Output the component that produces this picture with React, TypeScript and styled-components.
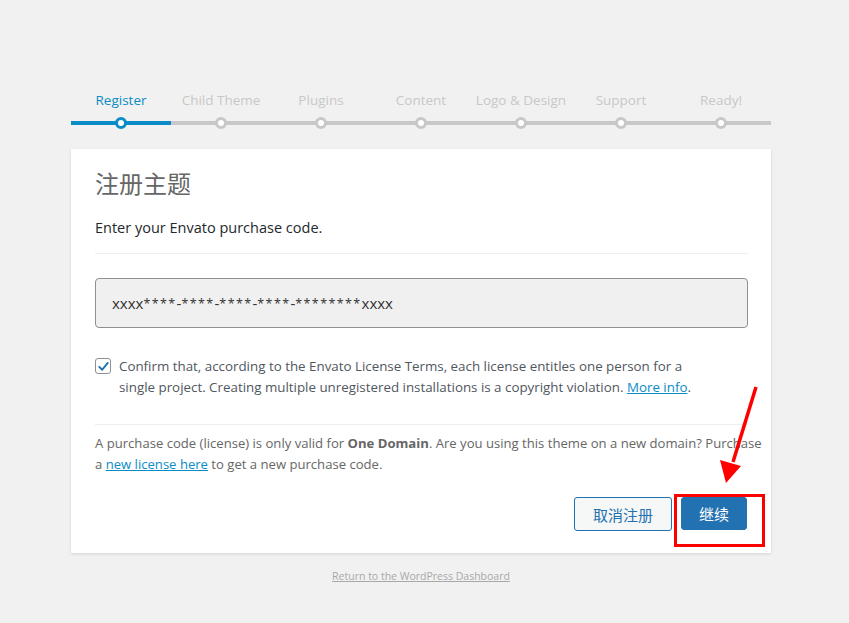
import styled, { createGlobalStyle } from "styled-components";

const GlobalStyle = createGlobalStyle`
  html, body {
    margin: 0;
    padding: 0;
    background: #f1f1f1;
    font-family: "Open Sans", "Noto Sans CJK SC", sans-serif;
  }
`;

const Page = styled.div`
  width: 700px;
  margin-left: 71px;
  padding-top: 88px;
  min-height: 623px;
  box-sizing: border-box;
`;

const Steps = styled.ol`
  display: flex;
  list-style: none;
  margin: 0;
  padding: 0;
`;

const Step = styled.li<{ $active?: boolean }>`
  flex: 1;
  display: flex;
  flex-direction: column;
  align-items: center;
  font-size: 13.5px;
  line-height: 24px;
  color: ${(p) => (p.$active ? "#0a8cc6" : "#c8c8c8")};
`;

const Track = styled.div<{ $active?: boolean }>`
  width: 100%;
  height: 4px;
  margin-top: 9px;
  display: flex;
  align-items: center;
  justify-content: center;
  background: ${(p) => (p.$active ? "#0a8cc6" : "#c8c8c8")};
`;

const Dot = styled.span<{ $active?: boolean }>`
  flex: none;
  width: 6px;
  height: 6px;
  border-radius: 50%;
  background: #fff;
  border: 3px solid ${(p) => (p.$active ? "#0a8cc6" : "#c8c8c8")};
`;

const Card = styled.div`
  margin-top: 24px;
  background: #fff;
  box-shadow: 0 1px 3px rgba(0, 0, 0, 0.13);
  padding: 19px 23px 22px 24px;
`;

const Title = styled.h1`
  margin: 0;
  font-size: 24px;
  line-height: 32px;
  font-weight: 400;
  color: #666;
`;

const Lead = styled.p`
  margin: 17px 0 0;
  font-size: 14.5px;
  line-height: 22px;
  color: #23282d;
`;

const Divider = styled.hr<{ $gap?: number }>`
  margin: ${(p) => p.$gap ?? 14}px 0 0;
  border: 0;
  border-top: 1px solid #eee;
`;

const CodeInput = styled.div`
  margin-top: 24px;
  height: 50px;
  box-sizing: border-box;
  padding: 0 16px;
  display: flex;
  align-items: center;
  background: #f0f0f0;
  border: 1px solid #8c8f94;
  border-radius: 4px;
  font-size: 15px;
  color: #333;
  white-space: pre;
`;

const Stars = styled.span`
  font-size: 12.5px;
  letter-spacing: 1.4px;
  vertical-align: 2px;
`;

const ConfirmRow = styled.label`
  margin-top: 28px;
  display: flex;
  gap: 8px;
  align-items: flex-start;
`;

const Box = styled.span`
  flex: none;
  width: 14px;
  height: 14px;
  margin-top: 2px;
  border: 1px solid #8c8f94;
  border-radius: 3px;
  background: #fff;
  display: flex;
  align-items: center;
  justify-content: center;
`;

const ConfirmText = styled.span`
  max-width: 580px;
  font-size: 13.35px;
  line-height: 21px;
  color: #50575e;
`;

const Link = styled.a`
  color: #0a8cc6;
  text-decoration: underline;
`;

const Note = styled.p`
  margin: 8px -20px 0 0;
  font-size: 13.1px;
  line-height: 21px;
  color: #666;
`;

const Actions = styled.div`
  margin-top: 22px;
  display: flex;
  justify-content: flex-end;
  gap: 9px;
  padding-right: 1px;
`;

const Button = styled.button<{ $primary?: boolean }>`
  position: relative;
  height: ${(p) => (p.$primary ? "33px" : "34px")};
  padding: 0 ${(p) => (p.$primary ? "17px" : "18px")};
  border-radius: 3px;
  border: 1px solid #2271b1;
  background: ${(p) => (p.$primary ? "#2271b1" : "#f6f7f7")};
  color: ${(p) => (p.$primary ? "#fff" : "#2271b1")};
  font-family: "Open Sans", "Noto Sans CJK SC", sans-serif;
  font-size: 15px;
  cursor: pointer;
`;

/* red annotation drawn over the continue button */
const Highlight = styled.span`
  position: absolute;
  left: -8px;
  top: -4px;
  width: 85px;
  height: 47px;
  border: 3px solid #f00;
  pointer-events: none;
`;

const Arrow = styled.svg`
  position: absolute;
  left: 32px;
  top: -118px;
  overflow: visible;
  pointer-events: none;
`;

const Footer = styled.div`
  margin-top: 16px;
  text-align: center;
  font-size: 10.5px;
  a {
    color: #a8a8a8;
  }
`;

const steps = [
  "Register",
  "Child Theme",
  "Plugins",
  "Content",
  "Logo & Design",
  "Support",
  "Ready!",
];

export default function App() {
  return (
    <>
      <GlobalStyle />
      <Page>
        <Steps>
          {steps.map((s, i) => (
            <Step key={s} $active={i === 0}>
              {s}
              <Track $active={i === 0}>
                <Dot $active={i === 0} />
              </Track>
            </Step>
          ))}
        </Steps>

        <Card>
          <Title>注册主题</Title>
          <Lead>Enter your Envato purchase code.</Lead>
          <Divider />
          <CodeInput>
            xxxx<Stars>****</Stars>-<Stars>****</Stars>-<Stars>****</Stars>-<Stars>****</Stars>-<Stars>********</Stars>xxxx
          </CodeInput>
          <ConfirmRow>
            <Box>
              <svg width="13" height="13" viewBox="0 0 20 20">
                <path
                  d="M3.5 10.5 L8 15 L16.5 4.5"
                  fill="none"
                  stroke="#2271b1"
                  strokeWidth="3"
                  strokeLinecap="round"
                  strokeLinejoin="round"
                />
              </svg>
            </Box>
            <ConfirmText>
              Confirm that, according to the Envato License Terms, each license
              entitles one person for a single project. Creating multiple
              unregistered installations is a copyright violation.{" "}
              <Link href="#">More info</Link>.
            </ConfirmText>
          </ConfirmRow>
          <Divider $gap={26} />
          <Note>
            A purchase code (license) is only valid for <b>One Domain</b>. Are
            you using this theme on a new domain? Purchase a{" "}
            <Link href="#">new license here</Link> to get a new purchase code.
          </Note>
          <Actions>
            <Button>取消注册</Button>
            <Button $primary>
              继续
              <Highlight />
              <Arrow width="50" height="110" viewBox="0 0 50 110">
                <line x1="42" y1="7" x2="19" y2="82" stroke="#f00" strokeWidth="3.5" />
                <polygon points="12,103 6,80 27,86" fill="#f00" />
              </Arrow>
            </Button>
          </Actions>
        </Card>

        <Footer>
          <a href="#">Return to the WordPress Dashboard</a>
        </Footer>
      </Page>
    </>
  );
}
